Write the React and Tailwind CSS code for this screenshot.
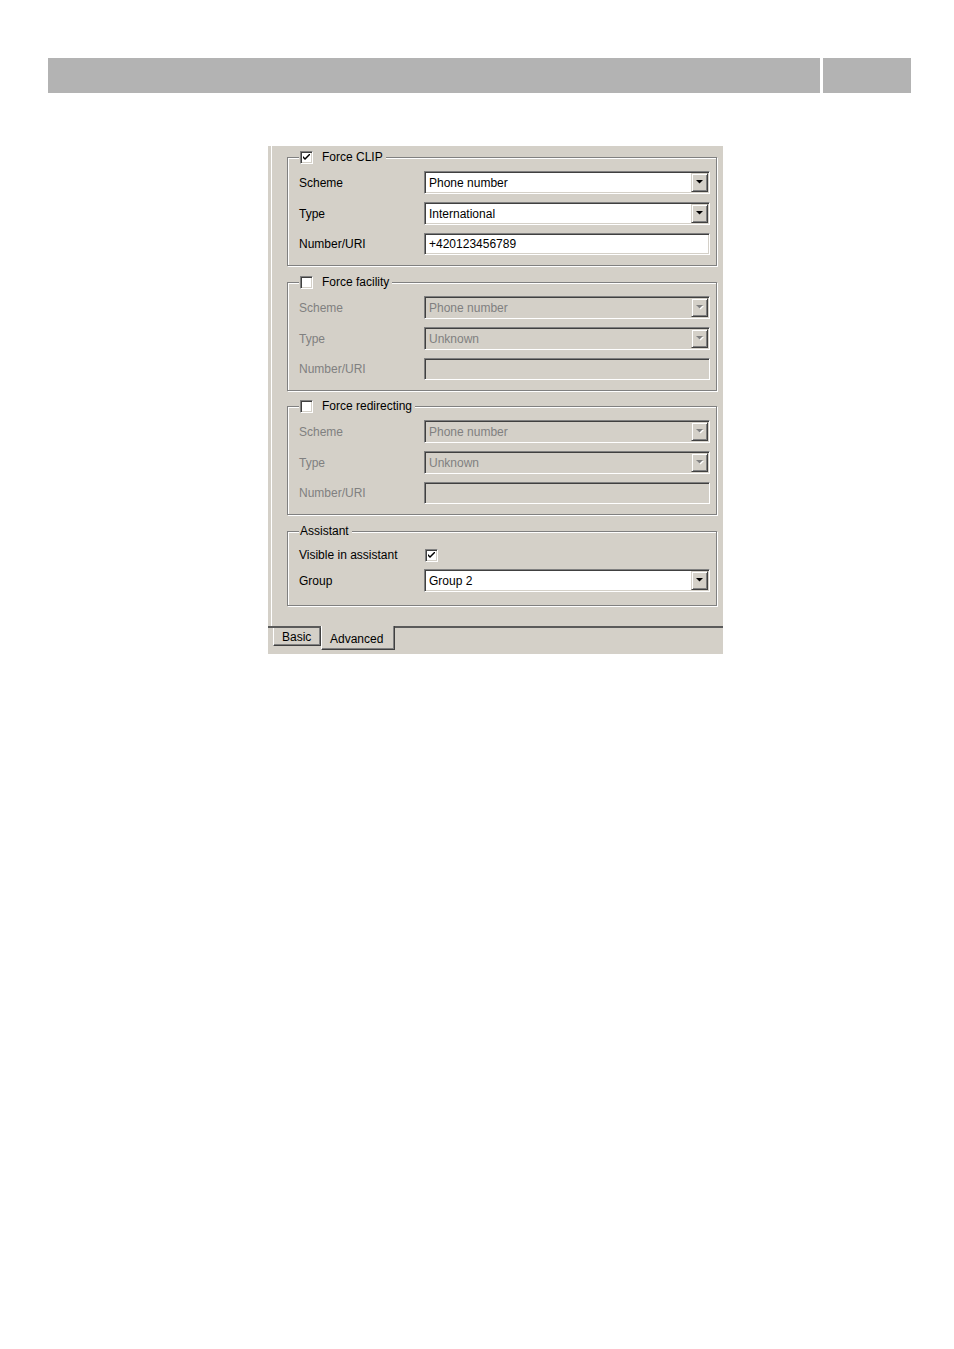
import React from "react";

// ================= SMALL WIN95-STYLE PARTS =================
const sunken =
  "border border-t-[#808080] border-l-[#808080] border-b-white border-r-white shadow-[inset_1px_1px_0_#404040,inset_-1px_-1px_0_#d4d0c8]";

function Arrow({ disabled }) {
  return (
    <svg width="8" height="5" viewBox="0 0 8 5">
      {disabled && <polygon points="1,1 8,1 4.5,4.5" fill="#ffffff" />}
      <polygon points="0,0 7,0 3.5,3.5" fill={disabled ? "#808080" : "#000000"} />
    </svg>
  );
}

function Combo({ value, disabled }) {
  return (
    <div
      className={`w-[286px] h-[23px] flex items-stretch p-[1px] ${sunken} ${
        disabled ? "bg-[#d4d0c8]" : "bg-white"
      }`}
    >
      <div
        className={`flex-1 flex items-center pl-[3px] ${
          disabled ? "text-[#808080]" : "text-black"
        }`}
      >
        {value}
      </div>
      <div className="w-[17px] flex items-center justify-center bg-[#d4d0c8] border border-t-[#d4d0c8] border-l-[#d4d0c8] border-b-[#404040] border-r-[#404040] shadow-[inset_1px_1px_0_#ffffff,inset_-1px_-1px_0_#808080]">
        <Arrow disabled={disabled} />
      </div>
    </div>
  );
}

function TextBox({ value, disabled }) {
  return (
    <div
      className={`w-[286px] h-[22px] flex items-center pl-[4px] ${sunken} ${
        disabled ? "bg-[#d4d0c8]" : "bg-white text-black"
      }`}
    >
      {value}
    </div>
  );
}

function CheckBox({ checked }) {
  return (
    <div className={`w-[13px] h-[13px] bg-white flex items-center justify-center ${sunken}`}>
      {checked && (
        <svg width="7" height="7" viewBox="0 0 7 7">
          <path d="M0 2 L2 4 L7 -1 L7 1 L2 6 L0 4 Z" fill="#000" />
        </svg>
      )}
    </div>
  );
}

function Row({ label, disabled, children }) {
  return (
    <div className="flex items-center">
      <div className={`w-[125px] ${disabled ? "text-[#808080]" : "text-black"}`}>{label}</div>
      {children}
    </div>
  );
}

// ================= GROUP BOX =================
function Group({ legend, checkbox, checked, children, className }) {
  return (
    <fieldset
      className={`w-[430px] border border-[#808080] shadow-[1px_1px_0_#ffffff,inset_1px_1px_0_#ffffff] pl-[11px] pr-[6px] ${className}`}
    >
      <legend className="px-[1px] h-[14px] bg-[#d4d0c8] flex items-center leading-none">
        {checkbox && (
          <span className="mr-[9px]">
            <CheckBox checked={checked} />
          </span>
        )}
        <span className="pr-[2px]">{legend}</span>
      </legend>
      {children}
    </fieldset>
  );
}

function NumberGroup({ legend, checked, type, number, className }) {
  const disabled = !checked;
  return (
    <Group legend={legend} checkbox checked={checked} className={className}>
      <div className="flex flex-col gap-[8px] pt-[7px] pb-[10px]">
        <Row label="Scheme" disabled={disabled}>
          <Combo value="Phone number" disabled={disabled} />
        </Row>
        <Row label="Type" disabled={disabled}>
          <Combo value={type} disabled={disabled} />
        </Row>
        <Row label="Number/URI" disabled={disabled}>
          <TextBox value={number} disabled={disabled} />
        </Row>
      </div>
    </Group>
  );
}

export default function App() {
  return (
    <div className="min-h-[1349px] bg-white font-['Liberation_Sans',Arial,sans-serif] text-[12px] text-black pt-[58px]">
      {/* TOP BAR */}
      <div className="flex gap-[3px] ml-[48px] mr-[43px]">
        <div className="flex-1 h-[35px] bg-[#b3b3b3]" />
        <div className="w-[88px] h-[35px] bg-[#b3b3b3]" />
      </div>

      {/* DIALOG PANEL */}
      <div className="ml-[268px] mt-[53px] w-[455px] h-[508px] bg-[#d4d0c8] flex flex-col">
        <div className="h-[480px] ml-[3px] border-l border-white pl-[15px] pt-[4px]">
          <NumberGroup legend="Force CLIP" checked type="International" number="+420123456789" />
          <NumberGroup legend="Force facility" type="Unknown" number="" className="mt-[9px]" />
          <NumberGroup legend="Force redirecting" type="Unknown" number="" className="mt-[8px]" />

          <Group legend="Assistant" className="mt-[9px]">
            <div className="flex flex-col gap-[5px] pt-[8px] pb-[13px]">
              <Row label="Visible in assistant">
                <div className="h-[16px] flex items-center pl-[1px]">
                  <CheckBox checked />
                </div>
              </Row>
              <Row label="Group">
                <Combo value="Group 2" />
              </Row>
            </div>
          </Group>
        </div>

        {/* TABS */}
        <div className="flex-1 border-t-[2px] border-[#5a5a5a] flex items-start pl-[5px]">
          <div className="w-[48px] h-[18px] flex items-center pl-[8px] border-l border-l-white border-r border-r-[#404040] border-b border-b-[#404040] shadow-[inset_-1px_-1px_0_#808080]">
            Basic
          </div>
          <div className="-mt-[2px] w-[74px] h-[24px] flex items-center pl-[8px] pt-[2px] bg-[#d4d0c8] border-l border-l-white border-r border-r-[#404040] border-b border-b-[#404040] shadow-[inset_-1px_-1px_0_#808080]">
            Advanced
          </div>
        </div>
      </div>
    </div>
  );
}
